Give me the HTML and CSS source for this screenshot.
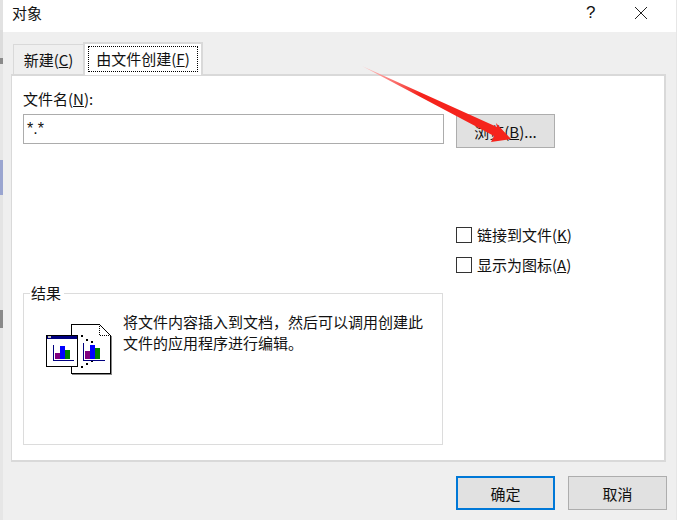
FILE: index.html
```html
<!DOCTYPE html>
<html lang="zh-CN">
<head>
<meta charset="utf-8">
<title>对象</title>
<link rel="stylesheet" href="styles.css">
</head>
<body>
<div class="desktop">
  <div class="behind">
    <span class="b b0"></span><span class="b b0d"></span><span class="b b1"></span><span class="b b1d"></span><span class="b b1e"></span><span class="b b2"></span><span class="b b3"></span><span class="b b4"></span><span class="b b5"></span>
  </div>
  <div class="dialog">
    <header class="titlebar">
      <span class="title">对象</span>
      <span class="help">?</span>
      <svg class="close" width="12" height="12" viewBox="0 0 12 12"><path d="M0 0L12 12M12 0L0 12" stroke="#222" fill="none"/></svg>
    </header>
    <div class="body">
      <div class="tabs">
        <div class="tab">新建(<u>C</u>)</div>
        <div class="tab active"><span class="focus">由文件创建(<u>F</u>)</span></div>
      </div>
      <div class="panel">
        <div class="file-label">文件名(<u>N</u>):</div>
        <div class="file-row">
          <div class="input">*.*</div>
          <button class="btn browse">浏览(<u>B</u>)...</button>
        </div>
        <div class="options">
          <label class="check"><span class="box"></span><span>链接到文件(<u>K</u>)</span></label>
          <label class="check"><span class="box"></span><span>显示为图标(<u>A</u>)</span></label>
        </div>
        <fieldset class="result">
          <legend>结果</legend>
          <svg class="icon" width="66" height="52" viewBox="0 0 66 52" shape-rendering="crispEdges">
            <path d="M25 1H53L64 12V50H25Z" fill="#fff" stroke="#000"/>
            <path d="M65 13V51H26" fill="none" stroke="#888"/>
            <path d="M53 1V12H64" fill="none" stroke="#000" stroke-dasharray="1 1"/>
            <g fill="#000">
              <rect x="35" y="12" width="2" height="2"/><rect x="40" y="16" width="2" height="2"/><rect x="45" y="18" width="2" height="2"/>
              <rect x="45" y="37" width="2" height="2"/><rect x="40" y="40" width="2" height="2"/><rect x="35" y="43" width="2" height="2"/>
            </g>
            <path d="M37.500 20V37H59" fill="none" stroke="#000080"/>
            <rect x="39" y="28" width="5" height="8" fill="#800080"/>
            <rect x="44" y="22" width="5" height="14" fill="#0000ff"/>
            <rect x="49" y="25" width="5" height="11" fill="#008000"/>
            <rect x="0.500" y="12.500" width="31" height="31" fill="#fff" stroke="#000"/>
            <rect x="1" y="13" width="30" height="3" fill="#000080"/>
            <rect x="2" y="13" width="3" height="2" fill="#c0c0c0"/>
            <path d="M7.500 22V37H28" fill="none" stroke="#000080"/>
            <rect x="9" y="30" width="5" height="6" fill="#800080"/>
            <rect x="14" y="23" width="5" height="13" fill="#0000ff"/>
            <rect x="19" y="27" width="5" height="9" fill="#008000"/>
          </svg>
          <p class="desc">将文件内容插入到文档，然后可以调用创建此文件的应用程序进行编辑。</p>
        </fieldset>
      </div>
      <div class="actions">
        <button class="btn primary">确定</button>
        <button class="btn">取消</button>
      </div>
    </div>
  </div>
  <svg class="arrow" width="677" height="520" viewBox="0 0 677 520">
    <defs>
      <linearGradient id="fade" gradientUnits="userSpaceOnUse" x1="362" y1="66" x2="420" y2="95">
        <stop offset="0" stop-color="#fcc"/>
        <stop offset="1" stop-color="#f5231c"/>
      </linearGradient>
    </defs>
    <path d="M362 66L497 127L496 123L511 139L491 142L494 136Z" fill="url(#fade)"/>
  </svg>
</div>
</body>
</html>
```
FILE: styles.css
```css
* { box-sizing: border-box; }
html, body { margin: 0; padding: 0; }
body { width: 677px; height: 520px; overflow: hidden; font-family: "Noto Sans CJK SC", "Liberation Sans", sans-serif; font-size: 15px; color: #111; }
u { text-decoration-thickness: 1px; text-underline-offset: 1px; }
.desktop { position: relative; display: flex; width: 677px; height: 520px; background: #fff; }
.behind { width: 3px; flex: none; display: flex; flex-direction: column; background: #e8e8e8; }
.b { display: block; width: 3px; }
.b0 { height: 30px; background: #e2e2e2; }
.b0d { height: 28px; background: #dcdcdc; }
.b1 { height: 6px; background: #8a8a8a; }
.b1d { height: 20px; background: #e6e6e6; }
.b1e { height: 76px; background: #e6e6e6; }
.b2 { height: 35px; background: #9aa5d0; }
.b3 { height: 115px; background: #e4e4e4; }
.b4 { height: 18px; background: #8a8a8a; }
.b5 { flex: 1; background: #e6e6e6; }
.dialog { flex: none; width: 674px; display: flex; flex-direction: column; border-right: 1px solid #e6e6e6; }
.titlebar { height: 32px; background: #fff; display: flex; align-items: center; padding: 0 29px 6px 9px; }
.title { flex: 1; line-height: 22px; }
.help { width: 49px; font-family: "Liberation Sans", sans-serif; font-size: 17px; }
.close { display: block; }
.body { flex: 1; background: #efefef; padding: 10px 9px 10px 8px; display: flex; flex-direction: column; }
.tabs { display: flex; height: 32px; padding-left: 2px; align-items: flex-end; }
.tab { height: 30px; width: 70px; border: 1px solid #d9d9d9; border-bottom: none; border-right: none; text-align: center; line-height: 30px; }
.tab.active { height: 33px; margin-bottom: -1px; width: 120px; background: #fff; border: 2px solid #d9d9d9; border-bottom: none; padding: 2px 3px 0; position: relative; z-index: 1; line-height: 1; }
.focus { display: block; height: 26px; line-height: 25px; outline: 1px dotted #000; outline-offset: -1px; text-align: center; white-space: nowrap; }
.panel { height: 388px; background: #fff; border: 1px solid #d9d9d9; border-width: 2px 2px 2px 1px; width: 655px; padding: 12px 0 0 11px; display: flex; flex-direction: column; }
.file-label { height: 26px; line-height: 22px; }
.file-row { display: flex; align-items: flex-start; gap: 12px; }
.input { width: 421px; height: 30px; border: 1px solid #acacac; line-height: 28px; padding-left: 3px; font-family: "Liberation Sans", sans-serif; font-size: 16px; }
.btn { width: 99px; height: 34px; border: 1px solid #adadad; background: #e1e1e1; font: inherit; color: inherit; padding: 0; }
.options { margin: 76px 0 0 433px; height: 59px; display: flex; flex-direction: column; gap: 8px; }
.check { display: flex; align-items: center; height: 22px; gap: 5px; line-height: 22px; }
.box { width: 16px; height: 16px; border: 1px solid #333; background: #fff; flex: none; }
.result { margin: 0; padding: 8px 16px 0 22px; width: 420px; height: 162px; border: 1px solid #dcdcdc; display: flex; align-items: flex-start; min-width: 0; }
.result legend { padding: 0 3px 0 1px; margin-left: -16px; line-height: 20px; }
.icon { flex: none; margin: 12px 11px 0 0; }
.desc { margin: 0; line-height: 21px; width: 305px; }
.actions { display: flex; justify-content: flex-end; gap: 13px; margin-top: 14px; }
.primary { border: 2px solid #0078d7; }
.arrow { position: absolute; left: 0; top: 0; pointer-events: none; }
```
